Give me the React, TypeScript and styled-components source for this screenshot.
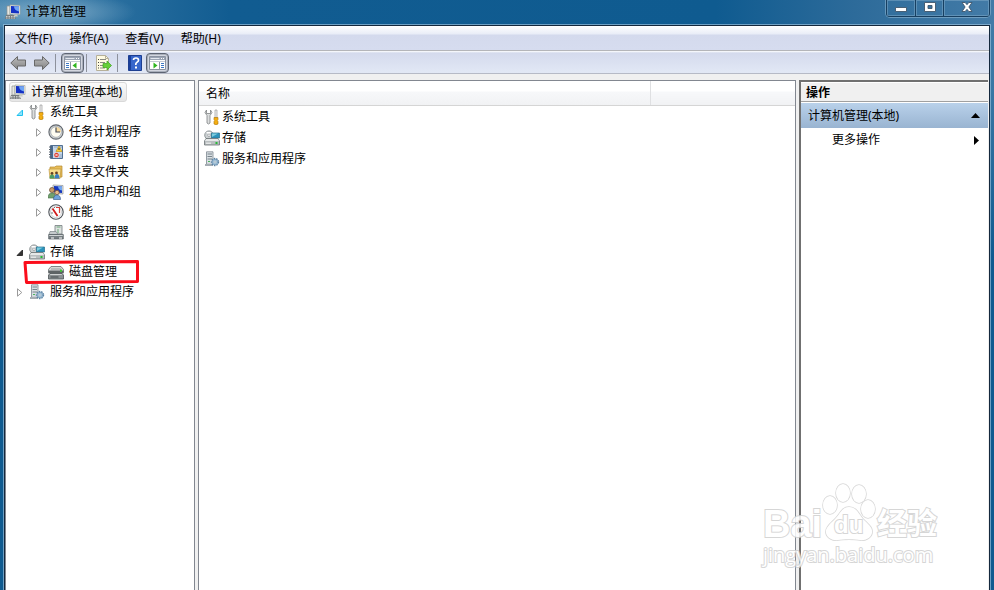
import React from "react";
import styled, { createGlobalStyle, css } from "styled-components";

const GlobalStyle = createGlobalStyle`
  *, *::before, *::after { box-sizing: border-box; }
  body { margin: 0; overflow: hidden; }
  body, button, table {
    font-family: "Noto Sans", "Noto Sans CJK SC", sans-serif;
    font-size: 12px;
    line-height: 16px;
    color: #000;
  }
  button { margin: 0; padding: 0; border: 0; background: none; text-align: left; white-space: nowrap; }
  ul { list-style: none; margin: 0; padding: 0; }
  svg { display: block; flex: none; }
`;

const Frame = styled.div`
  height: 100vh;
  display: flex;
  flex-direction: column;
  padding: 0 4px;
  position: relative;
  background:
    radial-gradient(ellipse 84px 20px at 52px 12px, rgba(160, 195, 216, 0.7), rgba(160, 195, 216, 0) 100%),
    linear-gradient(90deg, #4483ad 0, #2a6f9f 110px, #115c91 230px, #0f5b90 72%, #2d6b9a 86%, #437ba7 100%) top / 100% 27px no-repeat,
    linear-gradient(180deg, #427ca7 0, #3a77a4 90px, #105b90 260px, #105b90 100%);
`;

const TitleBar = styled.header`
  height: 25px;
  flex: none;
  display: flex;
  align-items: flex-start;
  justify-content: space-between;
`;

const Title = styled.h1`
  margin: 0;
  padding: 3px 0 0 1px;
  display: flex;
  align-items: center;
  gap: 5px;
  font-size: 12px;
  line-height: 18px;
  font-weight: 400;
`;

const Caption = styled.div`
  display: flex;
  height: 17px;
  border: 1px solid #173f61;
  border-top: 0;
  border-radius: 0 0 4px 4px;
  box-shadow: 0 0 0 1px rgba(150, 187, 213, 0.55);
`;

const CaptionButton = styled.button<{ $wide?: boolean }>`
  width: ${(p) => (p.$wide ? 46 : 28)}px;
  display: flex;
  justify-content: center;
  box-shadow: inset 0 0 0 1px rgba(150, 187, 213, 0.4);
  & + & { border-left: 1px solid #173f61; }
`;

const Client = styled.div`
  flex: 1;
  min-height: 0;
  display: flex;
  flex-direction: column;
  background: #f0f0f0;
  border: 1px solid #14283d;
  border-bottom: 0;
  box-shadow: 0 0 0 1px rgba(150, 190, 218, 0.7);
`;

const MenuBar = styled.nav`
  height: 25px;
  display: flex;
  align-items: center;
  gap: 17px;
  padding: 2px 0 0 10px;
  background: linear-gradient(#fff 0, #e9edf7 8px, #d4daed 9px, #d6dcef 100%);
  border-bottom: 1px solid #b4b5b9;
`;

const ToolBar = styled.div`
  height: 23px;
  display: flex;
  align-items: center;
  padding: 1px 0 0 2px;
  background: linear-gradient(#fff 0, #d4daed 2px, #e2e8f5 100%);
  border-bottom: 1px solid #b6bac6;
`;

const ToolButton = styled.button<{ $pressed?: boolean }>`
  width: 23px;
  height: 20px;
  display: flex;
  align-items: center;
  justify-content: center;
  ${(p) =>
    p.$pressed &&
    css`
      border: 1px solid #5e6573;
      border-radius: 4px;
      background: #d3d6df;
      box-shadow: inset 0 0 0 1px #a9afbb;
    `}
`;

const Separator = styled.span`
  width: 1px;
  height: 18px;
  margin: 0 5px 0 2px;
  background: #8d919c;
`;

const Panes = styled.main`
  flex: 1;
  min-height: 0;
  display: grid;
  grid-template-columns: 190px minmax(0, 1fr) 189px;
  gap: 3px;
  padding: 6px 1px 0 0;
`;

const Pane = styled.section`
  background: #fff;
  border: 1px solid #828790;
  border-bottom: 0;
`;

const TreePane = styled(Pane)`
  padding: 1px 3px;
`;

const Row = styled.div<{ $level: number }>`
  height: 20px;
  position: relative;
  display: flex;
  align-items: center;
  padding-left: ${(p) => (p.$level ? p.$level * 19 - 15 : 0)}px;
`;

const Expander = styled.button`
  width: 15px;
  height: 16px;
  flex: none;
  display: flex;
  align-items: center;
  justify-content: center;
  padding-right: 2px;
`;

const TreeItem = styled.button<{ $selected?: boolean }>`
  display: flex;
  align-items: center;
  gap: 5px;
  height: 20px;
  padding: 0 4px 0 1px;
  ${(p) =>
    p.$selected &&
    css`
      border: 1px solid #d9d9d9;
      border-radius: 3px;
      background: linear-gradient(#fafafa, #e6e6e6);
      padding-left: 0;
    `}
`;

const Spacer = styled.span`
  width: 15px;
`;

const Mark = styled.svg`
  position: absolute;
  left: 14px;
  top: -3px;
  pointer-events: none;
`;

const Table = styled.table`
  width: 100%;
  table-layout: fixed;
  border-collapse: collapse;
  th {
    height: 24px;
    padding: 2px 7px 0;
    text-align: left;
    font-weight: 400;
    background: linear-gradient(#fff 0, #fff 10px, #f7f8fa 11px, #f1f2f4 100%);
    border-bottom: 1px solid #d5d5d5;
  }
  th + th { border-left: 1px solid #dfe0e2; }
  td { height: 21px; padding: 2px 5px 0; }
`;

const NameColumn = styled.col`
  width: 451px;
`;

const ListItem = styled.button`
  display: flex;
  align-items: center;
  gap: 2px;
`;

const ActionsPane = styled.aside`
  background: #fff;
  border-top: 2px solid #707070;
  border-left: 2px solid #707070;
`;

const ActionsTitle = styled.h2`
  margin: 0;
  height: 20px;
  padding: 2px 5px 0;
  font-size: 12px;
  line-height: 16px;
  font-weight: 700;
  background: #f0f0f0;
  border-top: 1px solid #fff;
  border-bottom: 1px solid #a0a0a0;
`;

const ActionButton = styled.button<{ $heading?: boolean }>`
  display: flex;
  width: 100%;
  align-items: center;
  justify-content: space-between;
  height: ${(p) => (p.$heading ? 25 : 24)}px;
  padding: 0 8px 0 ${(p) => (p.$heading ? 7 : 31)}px;
  margin-top: ${(p) => (p.$heading ? 1 : 0)}px;
  background: ${(p) => (p.$heading ? "linear-gradient(#b9d1ea, #99b4d1)" : "#fff")};
`;

const Watermark = styled.div`
  position: absolute;
  right: 52px;
  bottom: 20px;
  width: 180px;
  height: 90px;
  color: #fff;
  opacity: 0.85;
  pointer-events: none;
  -webkit-text-stroke: 2px #d0d0d0;
  paint-order: stroke fill;
  font-family: "Liberation Sans", "Noto Sans CJK SC", sans-serif;
  font-weight: 700;
`;

const WatermarkText = styled.span<{ $x: number; $y: number; $size: number; $site?: boolean }>`
  position: absolute;
  left: ${(p) => p.$x}px;
  top: ${(p) => p.$y}px;
  font-size: ${(p) => p.$size}px;
  line-height: ${(p) => p.$size}px;
  white-space: nowrap;
  ${(p) => p.$site && css`font-family: "Open Sans", sans-serif; font-weight: 400;`}
`;

const Paw = styled.svg`
  position: absolute;
  left: 60px;
  top: 2px;
`;

type IconName = "computer" | "tools" | "clock" | "events" | "share" | "users" | "perf" | "device" | "storage" | "disk" | "services";

const art: Record<IconName, React.ReactNode> = {
  computer: (
    <>
      <path d="M2 2h3v9H2z" fill="#e6e7e2" stroke="#8d9291" strokeWidth=".7" />
      <path d="M5 1l10 .5v9L5 10z" fill="#e9ece8" stroke="#a3a79f" strokeWidth=".7" />
      <path d="M6 2l8 .4v7L6 9z" fill="#1431c4" />
      <path d="M9 2.2l5 .2v5C11 7 9 5 9 2.2z" fill="#6ea4f4" />
      <path d="M8 10.5h4l1 2H8z" fill="#c8cbc4" />
      <path d="M1 11h8l2 4H0z" fill="#777c7e" />
      <path d="M1 12.5h9M1 14h9" stroke="#dfe2e0" strokeWidth=".8" strokeDasharray="1.5 1" />
    </>
  ),
  tools: (
    <>
      <path d="M2.500 1L1 3.500 3 6.500V14q1.500 2 3 0V6.500l2-3L6.500 1v3.500h-4z" fill="#dcdede" stroke="#7d8283" strokeWidth=".8" />
      <path d="M11 1h2v8h-2z" fill="#f2f2f2" stroke="#8b8b8b" strokeWidth=".6" />
      <path d="M10 8.5h4v2l-.7 1 .7 1V15q-2 1.5-4 0v-2.5l.7-1-.7-1z" fill="#f4ae13" stroke="#ad7307" strokeWidth=".6" />
    </>
  ),
  clock: (
    <>
      <circle cx="8" cy="8" r="7.1" fill="#cfd3d5" stroke="#62676d" strokeWidth="1.1" />
      <circle cx="8" cy="8" r="5.3" fill="#fffdf1" stroke="#92999f" strokeWidth=".6" />
      <path d="M8 8V3a5 5 0 0 1 5 5z" fill="#f7dba0" />
      <path d="M8 3.5V8h4" fill="none" stroke="#484d56" strokeWidth="1.2" />
    </>
  ),
  events: (
    <>
      <path d="M2.5 1.5h12v13h-12z" fill="#c4d6ea" stroke="#527092" />
      <path d="M3 2h2v12H3z" fill="#476b93" />
      <path d="M1 3h3M1 5.5h3M1 8h3M1 10.5h3M1 13h3" stroke="#58636e" />
      <path d="M6 3h8M11 11h3M11 13h3" stroke="#90a7c1" />
      <path d="M11 2l3 5.500H8z" fill="#ffd22f" stroke="#bc8b0b" strokeWidth=".6" />
      <path d="M11 4v2" stroke="#333" />
      <circle cx="8.500" cy="11" r="2.600" fill="#d83b30" stroke="#fff" strokeWidth=".5" />
      <path d="M7.500 10l2 2m0-2l-2 2" stroke="#fff" strokeWidth=".8" />
    </>
  ),
  share: (
    <>
      <path d="M2 3h5l1-1h6v11l-11 1z" fill="#e8bd58" stroke="#b58b31" strokeWidth=".7" />
      <path d="M1 5h12l-1 9.5H2z" fill="#f8de8d" stroke="#bf973e" strokeWidth=".7" />
      <circle cx="4" cy="9.500" r="1.400" fill="#654124" />
      <circle cx="8.500" cy="9" r="1.400" fill="#654124" />
      <path d="M1.500 14.500q0-4 2.500-4t2.500 4z" fill="#4b9d67" />
      <path d="M6.500 14.500q0-4.500 2.500-4.500t2.500 4.500z" fill="#3b7fc5" />
    </>
  ),
  users: (
    <>
      <path d="M5 1l10 .5V10L5 9.5z" fill="#e5e8e8" stroke="#8d9295" strokeWidth=".7" />
      <path d="M6 2l8 .4V9L6 8.6z" fill="#1537be" />
      <path d="M10 2.2l4 .2v4C11 6 10 4 10 2.2z" fill="#73a9f1" />
      <circle cx="4" cy="6" r="2.500" fill="#c99b68" stroke="#62452e" strokeWidth=".7" />
      <path d="M0 14q0-5 4-5t4 5z" fill="#71a16d" stroke="#466e48" strokeWidth=".6" />
      <circle cx="9" cy="8.500" r="2.200" fill="#e6bd8b" stroke="#70482c" strokeWidth=".7" />
      <path d="M5.500 15.500q0-4.500 3.500-4.500t3.500 4.500z" fill="#6fa3dc" stroke="#2c5384" strokeWidth=".6" />
    </>
  ),
  perf: (
    <>
      <circle cx="8" cy="8" r="7.2" fill="#fff" stroke="#4b5056" strokeWidth="1.1" />
      <circle cx="8" cy="8" r="5.5" fill="#fff" stroke="#b9bdc0" strokeWidth=".7" />
      <path d="M4.500 4.500l5 7.500" fill="none" stroke="#d21c1c" strokeWidth="1.800" />
      <path d="M8 3.500h3.500V9" fill="none" stroke="#d6423a" strokeWidth="1.200" />
      <path d="M4 8v2M6 3.500h1" stroke="#555" strokeWidth=".8" />
    </>
  ),
  device: (
    <>
      <path d="M7 1.5h7V10H7z" fill="#dee2e0" stroke="#727b7d" strokeWidth=".8" />
      <path d="M8.5 3h4M10 5v4" stroke="#69a579" />
      <path d="M2 7.5h6l2 3H1z" fill="#c6cbcd" stroke="#7d8588" strokeWidth=".7" />
      <path d="M.7 10.5h14.6V15H.7z" fill="#777f83" stroke="#555d61" strokeWidth=".7" />
      <path d="M1.2 11h13.5v1H1.2z" fill="#d0d5d6" />
      <path d="M3 14h3M11 14h3" stroke="#fff" />
    </>
  ),
  storage: (
    <>
      <circle cx="5" cy="5.2" r="4.3" fill="#cbd0d2" stroke="#7e8588" strokeWidth=".8" />
      <path d="M5 5L2 2h5z" fill="#fff" />
      <circle cx="5" cy="5.2" r="1.3" fill="#fff" stroke="#808588" strokeWidth=".6" />
      <path d="M7.5 3h8v5h-8z" fill="#2c93bc" stroke="#276f8b" strokeWidth=".7" />
      <path d="M8 3.5h6L8 7z" fill="#7dccdd" />
      <path d="M2 8.5h12l1.5 2.5v4H.5v-4z" fill="#b9bec0" stroke="#6c7376" strokeWidth=".8" />
      <path d="M2 9h12l1 2H1z" fill="#e6e9e9" />
      <path d="M11.5 12h2v2h-2z" fill="#26bd38" />
      <path d="M2 13.2h5" stroke="#f5f5f5" />
    </>
  ),
  disk: (
    <>
      <path d="M3 2.500h10l2.500 3v3H.5v-3z" fill="#d6d9d7" stroke="#656b6c" strokeWidth=".8" />
      <path d="M3 5h10M1 6.500h14" stroke="#8b9193" strokeWidth=".8" />
      <path d="M.5 7h15v2.500H.5z" fill="#5d6365" />
      <path d="M2 9.500h12l1.500 1.500v4H.5v-4z" fill="#8a9092" stroke="#4d5356" strokeWidth=".8" />
      <path d="M2.500 10h11l.8.800H1.700z" fill="#e4e7e7" />
      <path d="M2.500 13h8" stroke="#43494c" />
      <path d="M12 5.500h2V8h-2z" fill="#42bd3a" />
    </>
  ),
  services: (
    <>
      <path d="M2.5.8H9v12.5H2.5z" fill="#d9dfe3" stroke="#7d8890" strokeWidth=".8" />
      <path d="M3.5 3H8M3.5 5.5H8M3.5 8H8" stroke="#78848c" />
      <path d="M4 10.5h2" stroke="#4bb55c" />
      <path d="M1 13h8v2H1z" fill="#a5adb3" />
      <circle cx="11" cy="11" r="3.4" fill="#a9c7df" stroke="#5e83a2" strokeWidth="1.6" strokeDasharray="1.4 1" />
      <circle cx="11" cy="11" r="2.6" fill="#b3d0e5" stroke="#6c91b0" strokeWidth=".6" />
      <circle cx="11" cy="11" r="1.1" fill="#fff" stroke="#66869f" strokeWidth=".5" />
    </>
  ),
};

function Icon({ name }: { name: IconName }) {
  return (
    <svg width="16" height="16" viewBox="0 0 16 16" aria-hidden="true">
      {art[name]}
    </svg>
  );
}

function ArrowIcon({ back }: { back?: boolean }) {
  return (
    <svg width="17" height="16" viewBox="0 0 17 16" aria-hidden="true">
      <defs>
        <linearGradient id="arrowFill" x1="0" y1="0" x2="0" y2="1">
          <stop offset="0" stopColor="#bdbdbd" />
          <stop offset="1" stopColor="#838383" />
        </linearGradient>
      </defs>
      <path
        d={back ? "M.8 8L7.5 1.5V5h8v6h-8v3.5z" : "M16.2 8L9.5 1.5V5h-8v6h8v3.5z"}
        fill="url(#arrowFill)"
        stroke="#686868"
        strokeLinejoin="round"
      />
    </svg>
  );
}

function PaneIcon({ right }: { right?: boolean }) {
  return (
    <svg width="17" height="14" viewBox="0 0 17 14" aria-hidden="true">
      <path d="M.5.5h16v13H.5z" fill="#fff" stroke="#8b93a1" />
      <path d="M1 1h15v3H1z" fill="#9ba4b4" />
      <path d="M1.500 2.500h9" stroke="#e4e8ef" />
      <path d="M12 2.500h1M14 2.500h1" stroke="#fff" />
      <path d="M1 5.500h15" stroke="#c5cbd5" />
      <path d={right ? "M10.500 6v7" : "M6.500 6v7"} stroke="#8b93a1" />
      <path
        d={right ? "M12 7.500h3M12 9.500h3M12 11.500h3" : "M2 7.500h3M2 9.500h3M2 11.500h3"}
        stroke="#3c78c4"
      />
      <path d={right ? "M4.500 6.500l4 3-4 3z" : "M12.500 6.500l-4 3 4 3z"} fill="#2eb51f" />
    </svg>
  );
}

function ExportIcon() {
  return (
    <svg width="16" height="16" viewBox="0 0 16 16" aria-hidden="true">
      <path d="M.5.5h9l3 3v12H.5z" fill="#fffbe2" stroke="#b6b099" />
      <path d="M9.500.5v3h3" fill="none" stroke="#b6b099" />
      <path d="M2 4.500h1M2 7.500h1M2 10.500h1M2 13h1" stroke="#444" />
      <path d="M4 4.500h6M4 7.500h5M4 10.500h4M4 13h5" stroke="#8b8b83" />
      <path d="M7 8.500h4V6l4.500 4.500L11 15v-2.500H7z" fill="#66cf38" stroke="#3da01f" strokeWidth=".7" />
    </svg>
  );
}

function HelpIcon() {
  return (
    <svg width="14" height="16" viewBox="0 0 14 16" aria-hidden="true">
      <path d="M.5.5h13v15H.5z" fill="#3766cb" stroke="#1d3e91" />
      <path d="M1 1h2v14H1z" fill="#193f9c" />
      <path d="M5.500 5q0-2 2.500-2t2.500 2.200q0 1.300-1.500 2T7.800 10" fill="none" stroke="#fff" strokeWidth="1.700" />
      <path d="M7 11.500h2v2H7z" fill="#fff" />
    </svg>
  );
}

function ExpandArrow({ state }: { state: "closed" | "open" | "hot" }) {
  return (
    <svg width="8" height="9" viewBox="0 0 8 9" aria-hidden="true">
      {state === "closed" && <path d="M1.500.8v7.400L5.800 4.500z" fill="#fff" stroke="#9a9a9a" />}
      {state === "open" && <path d="M6.500 2v5.500H1z" fill="#333" stroke="#1c1c1c" strokeWidth=".8" />}
      {state === "hot" && <path d="M6.500 2v5.500H1z" fill="#8fe2fb" stroke="#1fc2ef" />}
    </svg>
  );
}

function CaptionGlyph({ kind }: { kind: "min" | "max" | "close" }) {
  return (
    <svg width="14" height="14" viewBox="0 0 14 14" aria-hidden="true" fill="#fff" stroke="#40566b" strokeWidth=".9">
      {kind === "min" && <path d="M1.500 7.500h11v4h-11z" />}
      {kind === "max" && <path fillRule="evenodd" d="M1.500 2.500h11v9h-11zM5 5.500h4v3H5z" />}
      {kind === "close" && <path d="M2 2.500h3.200L7 4.700l1.800-2.200H12L8.900 7l3.100 4.500H8.800L7 9.300l-1.800 2.200H2L5.100 7z" />}
    </svg>
  );
}

type Node = { label: string; icon: IconName; level: number; state?: "closed" | "open" | "hot"; marked?: boolean };

const nodes: Node[] = [
  { label: "计算机管理(本地)", icon: "computer", level: 0 },
  { label: "系统工具", icon: "tools", level: 1, state: "hot" },
  { label: "任务计划程序", icon: "clock", level: 2, state: "closed" },
  { label: "事件查看器", icon: "events", level: 2, state: "closed" },
  { label: "共享文件夹", icon: "share", level: 2, state: "closed" },
  { label: "本地用户和组", icon: "users", level: 2, state: "closed" },
  { label: "性能", icon: "perf", level: 2, state: "closed" },
  { label: "设备管理器", icon: "device", level: 2 },
  { label: "存储", icon: "storage", level: 1, state: "open" },
  { label: "磁盘管理", icon: "disk", level: 2, marked: true },
  { label: "服务和应用程序", icon: "services", level: 1, state: "closed" },
];

const items: { label: string; icon: IconName }[] = [
  { label: "系统工具", icon: "tools" },
  { label: "存储", icon: "storage" },
  { label: "服务和应用程序", icon: "services" },
];

export default function App() {
  return (
    <Frame>
      <GlobalStyle />
      <TitleBar>
        <Title>
          <Icon name="computer" />
          计算机管理
        </Title>
        <Caption>
          <CaptionButton aria-label="最小化"><CaptionGlyph kind="min" /></CaptionButton>
          <CaptionButton aria-label="最大化"><CaptionGlyph kind="max" /></CaptionButton>
          <CaptionButton aria-label="关闭" $wide><CaptionGlyph kind="close" /></CaptionButton>
        </Caption>
      </TitleBar>
      <Client>
        <MenuBar>
          {["文件(F)", "操作(A)", "查看(V)", "帮助(H)"].map((label) => (
            <button key={label}>{label}</button>
          ))}
        </MenuBar>
        <ToolBar>
          <ToolButton aria-label="后退"><ArrowIcon back /></ToolButton>
          <ToolButton aria-label="前进"><ArrowIcon /></ToolButton>
          <Separator />
          <ToolButton aria-label="控制台树" $pressed><PaneIcon /></ToolButton>
          <Separator />
          <ToolButton aria-label="导出列表"><ExportIcon /></ToolButton>
          <Separator />
          <ToolButton aria-label="帮助"><HelpIcon /></ToolButton>
          <ToolButton aria-label="操作窗格" $pressed><PaneIcon right /></ToolButton>
        </ToolBar>
        <Panes>
          <TreePane>
            <ul>
              {nodes.map((n) => (
                <li key={n.label}>
                  <Row $level={n.level}>
                    {n.state ? (
                      <Expander aria-label={`展开 ${n.label}`}><ExpandArrow state={n.state} /></Expander>
                    ) : (
                      n.level > 0 && <Spacer />
                    )}
                    <TreeItem $selected={n.level === 0}>
                      <Icon name={n.icon} />
                      {n.label}
                    </TreeItem>
                    {n.marked && (
                      <Mark width="117" height="26" viewBox="0 0 117 26" aria-hidden="true">
                        <path d="M2 3.500L114.500 2.500V22.500L3.500 23.500z" fill="none" stroke="#fb0d1b" strokeWidth="3" strokeLinejoin="round" />
                      </Mark>
                    )}
                  </Row>
                </li>
              ))}
            </ul>
          </TreePane>
          <Pane>
            <Table>
              <colgroup>
                <NameColumn />
                <col />
              </colgroup>
              <thead>
                <tr>
                  <th scope="col">名称</th>
                  <th scope="col" aria-label="空列" />
                </tr>
              </thead>
              <tbody>
                {items.map((item) => (
                  <tr key={item.label}>
                    <td>
                      <ListItem>
                        <Icon name={item.icon} />
                        {item.label}
                      </ListItem>
                    </td>
                    <td />
                  </tr>
                ))}
              </tbody>
            </Table>
          </Pane>
          <ActionsPane>
            <ActionsTitle>操作</ActionsTitle>
            <ActionButton $heading>
              计算机管理(本地)
              <svg width="9" height="5" viewBox="0 0 9 5" aria-hidden="true"><path d="M0 5l4.500-5L9 5z" /></svg>
            </ActionButton>
            <ActionButton>
              更多操作
              <svg width="7" height="9" viewBox="0 0 7 9" aria-hidden="true"><path d="M1 0l5 4.500L1 9z" /></svg>
            </ActionButton>
          </ActionsPane>
        </Panes>
      </Client>
      <Watermark>
        <WatermarkText $x={1} $y={25} $size={38}>Bai</WatermarkText>
        <Paw width="60" height="60" viewBox="0 0 60 60" fill="#fff" stroke="#d0d0d0" strokeWidth="1.500" aria-hidden="true">
          <ellipse cx="8" cy="23" rx="7" ry="9" />
          <ellipse cx="21" cy="11" rx="7" ry="9" />
          <ellipse cx="37" cy="12" rx="7" ry="9" />
          <ellipse cx="46" cy="27" rx="7" ry="9" />
          <path d="M27 25c8 0 10 8 15 13s9 8 8 13-7 8-12 7-17-1-22 0-11-2-12-7 4-9 9-14 7-12 14-12z" />
        </Paw>
        <WatermarkText $x={72} $y={33} $size={24}>du</WatermarkText>
        <WatermarkText $x={115} $y={29} $size={30}>经验</WatermarkText>
        <WatermarkText $x={1} $y={65} $size={20} $site>jingyan.baidu.com</WatermarkText>
      </Watermark>
    </Frame>
  );
}
